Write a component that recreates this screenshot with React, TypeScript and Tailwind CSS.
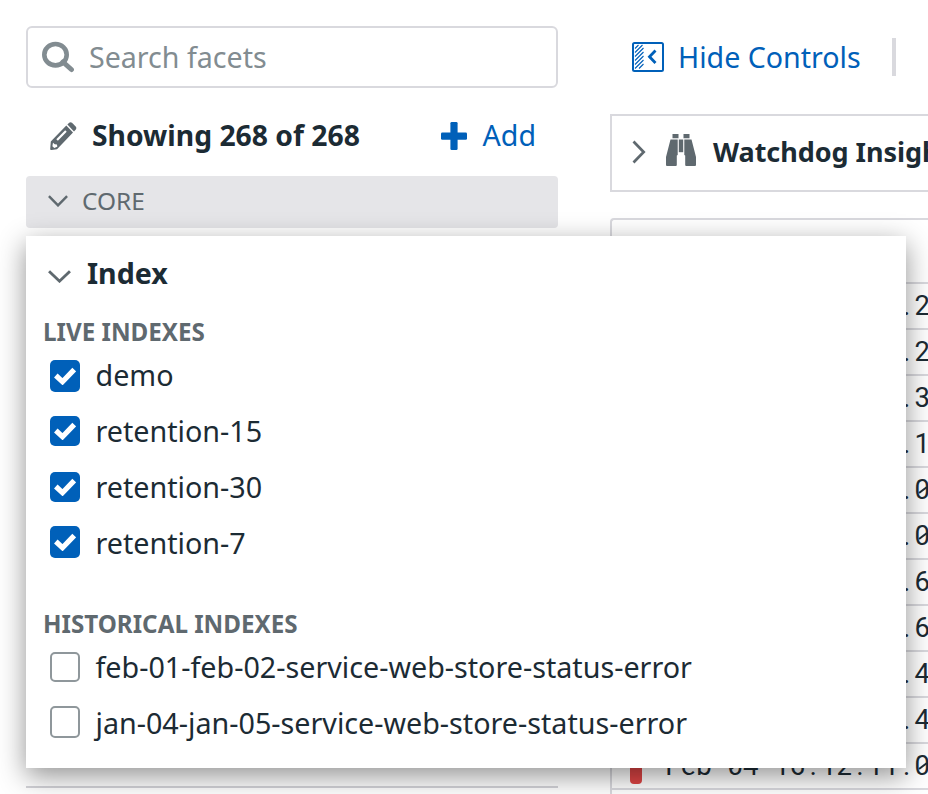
const timestamps = [
  'Feb 04 16:12:12.2',
  'Feb 04 16:12:12.2',
  'Feb 04 16:12:12.3',
  'Feb 04 16:12:12.1',
  'Feb 04 16:12:12.0',
  'Feb 04 16:12:12.0',
  'Feb 04 16:12:11.6',
  'Feb 04 16:12:11.6',
  'Feb 04 16:12:11.4',
  'Feb 04 16:12:11.4',
  'Feb 04 16:12:11.0',
];

const liveIndexes = [
  { name: 'demo', box: 'h-8' },
  { name: 'retention-15', box: 'h-[30px] mb-[2px]' },
  { name: 'retention-30', box: 'h-[30px] mb-[2px]' },
  { name: 'retention-7', box: 'h-8 mb-1' },
];
const historicalIndexes = [
  { name: 'feb-01-feb-02-service-web-store-status-error', box: 'h-[30px] mb-[2px]' },
  { name: 'jan-04-jan-05-service-web-store-status-error', box: 'h-8 mb-1' },
];

function SearchIcon() {
  return (
    <svg className="h-8 w-8 shrink-0" viewBox="0 0 32 32" fill="none" stroke="#828c91">
      <ellipse cx="13.5" cy="13.7" rx="11.2" ry="10.7" strokeWidth="4.6" />
      <path d="M21 21 L29.4 28.5" strokeWidth="5" strokeLinecap="round" />
    </svg>
  );
}

function PencilIcon() {
  return (
    <svg className="h-7 w-[27px] shrink-0" viewBox="0 0 27 28" fill="#5f696f">
      <path
        fillRule="evenodd"
        d="M16.3 3.6 23 10.5 8.7 25.5 7 27.300 1.600 28 Q.2 28.200 .2 27L.8 19.500ZM15.200 8.200 6.300 17.300 7.900 18.700 16.700 9.700ZM3 20.800 2.400 24.200 4.300 25.900 7.300 24.800 7 22.400 4.800 22.200Z"
      />
      <path d="M17.400 2.500 19.200.8Q20.400-.3 22 .8L25.700 4.500Q26.900 6 25.800 7.500L24 9.500Z" />
    </svg>
  );
}

function PlusIcon() {
  return (
    <svg className="h-7 w-[26px] shrink-0" viewBox="0 0 26 28" fill="#0060b9">
      <rect x="9.400" y="0" width="7.200" height="28" rx="1.300" />
      <rect x="0" y="10.500" width="26" height="7.200" rx="1.300" />
    </svg>
  );
}

function PanelIcon() {
  return (
    <svg className="h-[30px] w-8 shrink-0" viewBox="0 0 32 30" fill="none" stroke="#0060b9">
      <rect x="1" y="1" width="30" height="28" rx="1.500" strokeWidth="2" />
      <path
        strokeWidth="1.1"
        d="M3 6.500 6.500 3M3 10.500 10.500 3M3 14.500 11.500 6M3 18.500 11.500 10M3 22.500 11.500 14M3 26.500 11.500 18M7 26.500 11.500 22"
      />
      <path d="M23.500 8.500 17.500 14.700 23.500 21" strokeWidth="2.800" />
    </svg>
  );
}

function BinocularsIcon() {
  return (
    <svg className="h-8 w-[30px] shrink-0" viewBox="0 0 30 32" fill="#5f696f">
      <path d="M6.500 0h6v4.300h-6zM17.500 0h6v4.300h-6z" />
      <path d="M4.500 5.500h7.200v15.500l-.9.500V31q0 1-1 1H1q-1 0-1-1V23Z" />
      <path d="M25.500 5.500h-7.200v15.500l.9.500V31q0 1 1 1H29q1 0 1-1V23Z" />
      <path d="M12.800 5.500h4.400v12.700h-4.400z" />
    </svg>
  );
}

function ChevronDown({ className }: { className: string }) {
  return (
    <svg className={className} viewBox="0 0 22 13" preserveAspectRatio="none" fill="none" stroke="#5f696f">
      <path d="M1 1.200 11 11.200 21 1.200" strokeWidth="2.700" />
    </svg>
  );
}

function ChevronRight() {
  return (
    <svg className="mb-[2px] h-6 w-[14px] shrink-0" viewBox="0 0 14 24" fill="none" stroke="#5f696f">
      <path d="M1.500 1.500 11.700 12 1.500 22.500" strokeWidth="2.700" />
    </svg>
  );
}

function Checkbox({ checked, box }: { checked: boolean; box: string }) {
  return checked ? (
    <span className={`flex w-[30px] shrink-0 items-center justify-center rounded-[5px] bg-[#0060b9] ${box}`}>
      <svg className="h-[18px] w-[22px]" viewBox="0 0 22 18" fill="none" stroke="#fff">
        <path d="M1.800 8.500 8.500 14.700 20.200 2.500" strokeWidth="5.2" />
      </svg>
    </span>
  ) : (
    <span className={`w-[30px] shrink-0 rounded-[5px] border-2 border-[#8f979b] bg-white ${box}`} />
  );
}

function IndexRow({ name, box, checked }: { name: string; box: string; checked: boolean }) {
  return (
    <label className="flex h-14 items-center gap-[15.5px] pl-6 text-[28.7px] leading-[56px] whitespace-nowrap">
      <Checkbox checked={checked} box={box} />
      <span className="mb-[2px]">{name}</span>
    </label>
  );
}

function Timestamp({ value }: { value: string }) {
  return (
    <div className="flex font-[Roboto,sans-serif] text-[27.5px] leading-[44px]">
      {value.split('').map((c, i) => (
        <span
          key={i}
          className={
            c === '0'
              ? 'relative flex w-[15.6px] shrink-0 justify-center after:absolute after:top-[21px] after:left-[3px] after:h-[2px] after:w-[10px] after:-rotate-[38deg] after:bg-[#1c2b34]'
              : 'flex w-[15.6px] shrink-0 justify-center whitespace-pre'
          }
        >
          {c}
        </span>
      ))}
    </div>
  );
}

export default function App() {
  return (
    <div className="relative flex h-[794px] w-[928px] gap-[52px] overflow-hidden bg-white pl-[26px] font-['Noto_Sans',sans-serif] text-[#1c2b34]">
      <aside className="flex w-[532px] shrink-0 flex-col pt-[26px]">
        <div className="flex h-[62px] items-center gap-[15px] rounded-md border-2 border-[#d9d9de] pl-[14px] text-[28.6px] text-[#828c91]">
          <SearchIcon />
          <span className="mt-px">Search facets</span>
        </div>
        <div className="flex h-[88px] items-center pt-2 pr-[22px] pl-6 text-[28.3px]">
          <PencilIcon />
          <span className="mb-[2px] ml-[15px] font-bold">Showing 268 of 268</span>
          <button className="ml-auto flex items-center gap-4 text-[28.6px] text-[#0060b9]">
            <PlusIcon />
            <span className="mb-[2px]">Add</span>
          </button>
        </div>
        <div className="flex h-[52px] items-center gap-[14px] rounded bg-[#e5e5e8] pl-[22px] text-[24.4px] text-[#5f696f]">
          <ChevronDown className="mb-[2px] h-3 w-5" />
          <span className="mb-[2px]">CORE</span>
        </div>
        <div className="mt-auto mb-[6px] h-[2px] bg-[#d3d3d8]" />
      </aside>

      <main className="flex w-[340px] shrink-0 flex-col">
        <div className="flex h-[114px] items-center pl-[22px] text-[28.6px] text-[#0060b9]">
          <PanelIcon />
          <span className="mt-px ml-[14px] w-[182px] whitespace-nowrap">Hide Controls</span>
          <span className="ml-8 h-[38px] w-1 bg-[#d9d9de]" />
        </div>
        <div className="flex h-[78px] items-center border-2 border-[#d9d9de] pl-5 text-[27px] font-bold whitespace-nowrap">
          <ChevronRight />
          <span className="mb-1.5 ml-5 flex">
            <BinocularsIcon />
          </span>
          <span className="mb-[2px] ml-[17px] tracking-[-0.05px]">Watchdog Insights</span>
        </div>
        <div className="mt-[26px] flex-1 rounded-tl border-t-2 border-l-2 border-[#d9d9de]">
          <div className="h-[62px]" />
          {timestamps.map((t, i) => (
            <div key={i} className="flex h-[46px] items-center gap-[23px] border-t-2 border-[#d9d9de] pl-[18px]">
              <span className="h-[36px] w-3 shrink-0 rounded bg-[#df4545]" />
              <Timestamp value={t} />
            </div>
          ))}
          <div className="border-t-2 border-[#d9d9de]" />
        </div>
      </main>

      <section className="absolute top-[236px] left-[26px] flex h-[532px] w-[880px] flex-col bg-white shadow-[0_8px_26px_rgba(0,0,0,0.43)]">
        <div className="flex h-[76px] items-center gap-4 pl-[22px] text-[28.6px] font-bold">
          <ChevronDown className="mt-1 h-[13px] w-[23px]" />
          <span className="mb-[2px]">Index</span>
        </div>
        <h3 className="h-9 pl-[17px] text-[24.2px] leading-[39px] font-bold text-[#5f696f]">LIVE INDEXES</h3>
        {liveIndexes.map((item) => (
          <IndexRow key={item.name} {...item} checked />
        ))}
        <h3 className="mt-8 h-9 pl-[17px] text-[24.2px] leading-[39px] font-bold text-[#5f696f]">HISTORICAL INDEXES</h3>
        {historicalIndexes.map((item) => (
          <IndexRow key={item.name} {...item} checked={false} />
        ))}
      </section>
    </div>
  );
}
